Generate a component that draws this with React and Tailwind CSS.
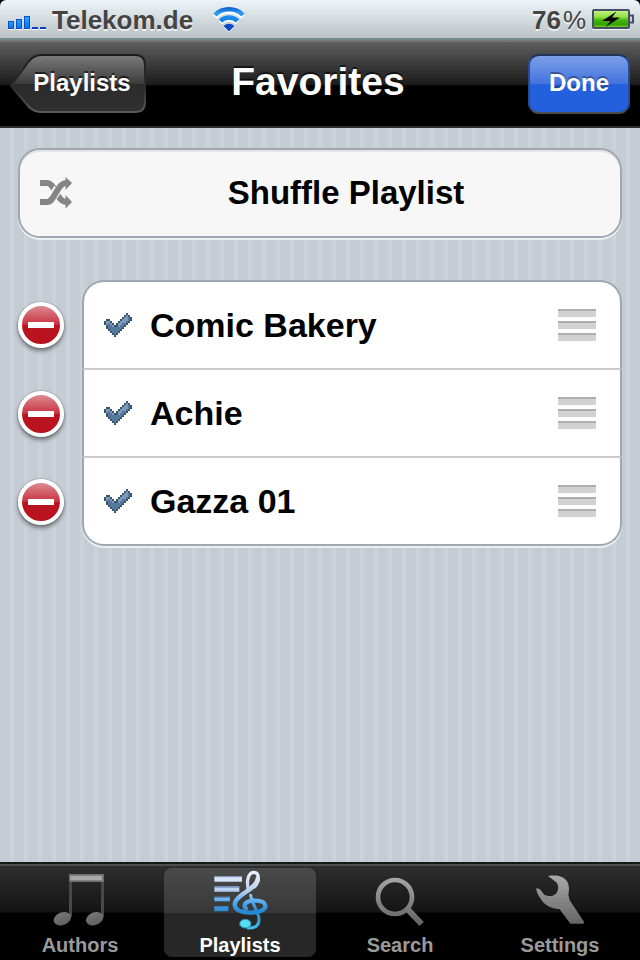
import React from "react";

const TRACKS = ["Comic Bakery", "Achie", "Gazza 01"];

const CHECK_ROWS = [
  "...........d..",
  "..........dld.",
  ".........dllmd",
  ".dd.....dlllmd",
  "dlld...dlllmd.",
  "dlmld.dllmmd..",
  ".dmmlddlmmd...",
  ".dmmmmmmmd....",
  "..dmmmmmd.....",
  "...dmmmd......",
  "....dmd.......",
  ".....d........",
];

const CHECK_COLOURS = { d: "#3a546f", m: "#54779e", l: "#7b9abb" };

function CheckIcon() {
  return (
    <svg viewBox="0 0 14 12" className="h-6 w-7 shrink-0" shapeRendering="crispEdges" aria-hidden="true">
      {CHECK_ROWS.map((row, y) =>
        row.split("").map((c, x) =>
          c === "." ? null : (
            <rect key={`${x}-${y}`} x={x} y={y} width="1" height="1" fill={CHECK_COLOURS[c]} />
          )
        )
      )}
    </svg>
  );
}

function SignalIcon() {
  return (
    <svg viewBox="0 0 39 22" className="h-[22px] w-[39px]" aria-hidden="true">
      <defs>
        <linearGradient id="signal" x1="0" y1="0" x2="0" y2="1">
          <stop offset="0" stopColor="#2aa4fa" />
          <stop offset="1" stopColor="#0a6fe6" />
        </linearGradient>
      </defs>
      <g transform="translate(0 6)">
        <g fill="url(#signal)" stroke="#0b50c8" strokeWidth="1">
          <rect x="0.5" y="6.500" width="5" height="7" />
          <rect x="8.500" y="4.500" width="5" height="9" />
          <rect x="16.500" y="1.500" width="5" height="12" />
        </g>
        <path d="M24 12h6v2h-6zM32 12h6v2h-6z" fill="#0a3fc4" />
        <path d="M0 14h6v1H0zM8 14h6v1H8zM16 14h6v1h-6zM24 14h6v1h-6zM32 14h6v1h-6z" fill="#fff" />
      </g>
    </svg>
  );
}

function WifiIcon() {
  return (
    <svg viewBox="0 0 32 26" className="h-[26px] w-8" aria-hidden="true">
      <defs>
        <linearGradient id="wifi" gradientUnits="userSpaceOnUse" x1="0" y1="0" x2="0" y2="24">
          <stop offset="0" stopColor="#0d57c8" />
          <stop offset="0.25" stopColor="#2b9bf4" />
          <stop offset="0.55" stopColor="#1583ee" />
          <stop offset="1" stopColor="#0a3fbd" />
        </linearGradient>
      </defs>
      <g transform="translate(0 1)" fill="none" stroke="#fff" strokeWidth="5">
        <path d="M2 9a20 20 0 0 1 28 0" />
        <path d="M7.500 14.500a12 12 0 0 1 17 0" />
      </g>
      <path d="M16 25.500l-6-6q6-5 12 0z" fill="#fff" />
      <g fill="none" stroke="url(#wifi)" strokeWidth="4.500">
        <path d="M2 8a20 20 0 0 1 28 0" />
        <path d="M7.500 14a12 12 0 0 1 17 0" />
      </g>
      <path d="M16 24.500l-5.500-5.500q5.500-4.500 11 0z" fill="#0a49c8" />
    </svg>
  );
}

function BatteryIcon() {
  return (
    <svg viewBox="0 0 42 22" className="h-[22px] w-[42px]" aria-hidden="true">
      <defs>
        <linearGradient id="battery" x1="0" y1="0" x2="0" y2="1">
          <stop offset="0" stopColor="#c8f58c" />
          <stop offset="0.4" stopColor="#8fe03c" />
          <stop offset="0.55" stopColor="#43b80c" />
          <stop offset="0.8" stopColor="#35a000" />
          <stop offset="1" stopColor="#7be02a" />
        </linearGradient>
      </defs>
      <path d="M0 20h38v1H0z" fill="#fff" opacity="0.8" />
      <rect x="1" y="1" width="36" height="18" rx="1" fill="url(#battery)" stroke="#484e66" strokeWidth="2" />
      <path d="M38 6.500h3v7h-3" fill="#cdd2d8" stroke="#484e66" strokeWidth="2" />
      <path d="M24.500 2.500L10 12h8.500l-5 6L28 8.500h-8z" fill="#000" />
    </svg>
  );
}

function ShuffleIcon() {
  return (
    <svg viewBox="0 0 32 32" className="h-8 w-8 shrink-0" aria-hidden="true">
      <g fill="none" stroke="#858585" strokeWidth="6">
        <path d="M0 6h7c4 0 6 4 9 9.500s6 9.500 10 9.500h2" />
        <path d="M13 19.500l5-8" stroke="#f7f7f7" strokeWidth="9" />
        <path d="M0 25h7c4 0 6-4 9-9.500S22 6 26 6h2" />
      </g>
      <path d="M25.500 0L32 6l-6.500 7zM25.500 18L32 25l-6.500 6.500z" fill="#858585" />
    </svg>
  );
}

function MinusButton({ label }) {
  return (
    <button
      type="button"
      aria-label={label}
      className="flex h-[46px] w-[46px] items-center justify-center rounded-full border-4 border-white bg-[linear-gradient(#dd8a92_0%,#c8323f_49%,#ba1320_50%,#ba1320_100%)] shadow-[0_3px_4px_rgba(0,0,0,0.45),0_0_2px_rgba(0,0,0,0.35)]"
    >
      <span className="h-[6px] w-[26px] bg-white" />
    </button>
  );
}

function Grip() {
  return (
    <span className="flex w-[38px] flex-col gap-1">
      <span className="h-2 border-t-2 border-[#aeaeae] bg-[#d2d2d2]" />
      <span className="h-2 border-t-2 border-[#aeaeae] bg-[#d2d2d2]" />
      <span className="h-2 border-t-2 border-[#aeaeae] bg-[#d2d2d2]" />
    </span>
  );
}

function GreyGradient({ id }) {
  return (
    <defs>
      <linearGradient id={id} gradientUnits="userSpaceOnUse" x1="0" y1="70" x2="0" y2="230">
        <stop offset="0" stopColor="#adadad" />
        <stop offset="1" stopColor="#606060" />
      </linearGradient>
    </defs>
  );
}

function NotesIcon() {
  return (
    <svg viewBox="156 60 168 180" className="h-[60px] w-14" aria-hidden="true">
      <GreyGradient id="notes" />
      <path d="M207 72h105v24H207z" fill="#707070" />
      <path d="M211 77h95v14h-95z" fill="#a8a8a8" />
      <path d="M207 96h9v104h-9zM303 96h9v104h-9z" fill="#484848" />
      <g fill="url(#notes)">
        <ellipse cx="187" cy="206" rx="27" ry="19" transform="rotate(-22 187 206)" />
        <ellipse cx="284" cy="206" rx="27" ry="19" transform="rotate(-22 284 206)" />
      </g>
    </svg>
  );
}

function ClefIcon() {
  return (
    <svg viewBox="156 60 168 180" className="h-[60px] w-14" aria-hidden="true">
      <defs>
        <linearGradient id="clef" gradientUnits="userSpaceOnUse" x1="0" y1="60" x2="0" y2="240">
          <stop offset="0" stopColor="#f2f5fb" />
          <stop offset="0.35" stopColor="#b9cff0" />
          <stop offset="0.52" stopColor="#5aaef0" />
          <stop offset="0.7" stopColor="#2687d2" />
          <stop offset="1" stopColor="#3fc4ea" />
        </linearGradient>
      </defs>
      <path
        d="M163 78h83v17h-83zM163 109h75v16h-75zM163 140h47v14h-47zM163 168h42v16h-42z"
        fill="url(#clef)"
      />
      <path d="M163 78h83v4h-83zM163 109h75v4h-75zM163 140h47v4h-47zM163 168h42v4h-42z" fill="#42689e" opacity="0.6" />
      <g fill="none" stroke="url(#clef)" strokeLinecap="round">
        <path d="M266 122C258 96 264 68 281 67C298 68 300 92 284 110" strokeWidth="10" />
        <path d="M293 86C292 118 224 134 224 164C225 182 248 189 275 188C300 187 317 180 316 167C315 154 296 151 277 152C258 154 248 164 258 176" strokeWidth="13" />
        <path d="M272 136C276 160 290 176 296 200C301 224 288 235 264 234" strokeWidth="9" />
      </g>
      <ellipse cx="256" cy="221" rx="17" ry="13" fill="#55dcf2" stroke="#2393b8" strokeWidth="3" />
    </svg>
  );
}

function SearchIcon() {
  return (
    <svg viewBox="96 60 168 180" className="h-[60px] w-14" aria-hidden="true">
      <GreyGradient id="search" />
      <g fill="none" stroke="url(#search)">
        <circle cx="165" cy="141" r="51" strokeWidth="14" />
        <path d="M203 178l42 44" strokeWidth="18" />
      </g>
    </svg>
  );
}

function WrenchIcon() {
  return (
    <svg viewBox="576 60 168 180" className="h-[60px] w-14" aria-hidden="true">
      <GreyGradient id="wrench" />
      <path
        d="M624 78C650 74 672 79 682 95C688 106 688 120 685 134L689 151L732 215L731 221H691L659 178C632 176 612 165 601 145C594 134 588 124 589 114L600 118L613 134C627 141 642 139 650 128C657 117 656 103 647 95Z"
        fill="url(#wrench)"
      />
    </svg>
  );
}

const TABS = [
  { label: "Authors", Icon: NotesIcon },
  { label: "Playlists", Icon: ClefIcon, active: true },
  { label: "Search", Icon: SearchIcon },
  { label: "Settings", Icon: WrenchIcon },
];

function rowShape(index) {
  if (index === 0) return "h-[90px] rounded-t-[22px] border-t-2 border-b-2 border-b-[#cbcbcd]";
  if (index === TRACKS.length - 1)
    return "h-[88px] rounded-b-[22px] border-b-2 shadow-[0_2px_0_#eef1f4]";
  return "h-[88px] border-b-2 border-b-[#cbcbcd]";
}

export default function App() {
  return (
    <div className="flex min-h-screen flex-col bg-[#c5ccd4] font-['Liberation_Sans',Arial,sans-serif] font-bold">
      <div className="bg-black">
        <div className="flex h-10 items-center justify-between rounded-t-[6px] border-b-2 border-[#78878c] bg-[linear-gradient(#eef5f8,#bac2c5)] pt-[2px] pr-[6px] pl-2 text-[26px] text-[#444] [text-shadow:0_2px_0_rgba(255,255,255,0.7)]">
          <div className="flex items-center">
            <SignalIcon />
            <span className="pl-[5px]">Telekom.de</span>
            <span className="pl-5">
              <WifiIcon />
            </span>
          </div>
          <div className="flex items-center gap-[6px]">
            <span className="flex gap-[2px]">
              <span>76</span>
              <span className="font-normal">%</span>
            </span>
            <BatteryIcon />
          </div>
        </div>
      </div>

      <header className="grid h-[88px] grid-cols-[1fr_auto_1fr] items-center border-t-2 border-b-2 border-t-[#757575] border-b-[#2d2d2d] bg-[linear-gradient(#5e5e5e_0%,#1b1b1b_51%,#000_52%,#000_100%)] px-[10px] text-white">
        <button
          type="button"
          className="relative flex h-[60px] w-[136px] items-center justify-center pb-[2px] pl-2 text-2xl [text-shadow:0_-2px_0_rgba(0,0,0,0.6)]"
        >
          <svg viewBox="0 0 136 60" className="absolute inset-0 h-full w-full" aria-hidden="true">
            <defs>
              <linearGradient id="back" x1="0" y1="0" x2="0" y2="1">
                <stop offset="0" stopColor="#7c7c7c" />
                <stop offset="0.5" stopColor="#3c3c3c" />
                <stop offset="0.51" stopColor="#2b2b2b" />
                <stop offset="1" stopColor="#303030" />
              </linearGradient>
              <linearGradient id="backEdge" x1="0" y1="0" x2="0" y2="1">
                <stop offset="0" stopColor="#1c1c1c" />
                <stop offset="0.6" stopColor="#303030" />
                <stop offset="1" stopColor="#5a5a5a" />
              </linearGradient>
            </defs>
            <path
              d="M1 32L19 7Q24 1 32 1H125Q135 1 135 11V48Q135 58 125 58H32Q24 58 19 53Z"
              fill="url(#back)"
              stroke="url(#backEdge)"
              strokeWidth="2"
            />
          </svg>
          <span className="relative">Playlists</span>
        </button>
        <h1 className="pr-1 pb-1 text-[39px] leading-[44px] [text-shadow:0_-2px_0_rgba(0,0,0,0.6)]">Favorites</h1>
        <button
          type="button"
          className="h-[60px] w-[102px] justify-self-end rounded-[11px] border-2 border-t-[#23345c] border-r-[#2a4a92] border-b-[#4c4c4c] border-l-[#2a4a92] bg-[linear-gradient(#7d9fe8_0%,#4173dd_50%,#2260dd_51%,#2260dd_100%)] pb-[2px] text-2xl [text-shadow:0_-2px_0_rgba(0,0,0,0.35)]"
        >
          Done
        </button>
      </header>

      <main className="flex-1 bg-[repeating-linear-gradient(90deg,#c5ccd4_0px,#c5ccd4_10px,#cbd2d8_10px,#cbd2d8_14px)] px-[18px] pt-5">
        <button
          type="button"
          className="flex h-[90px] w-full items-center rounded-[22px] border-2 border-[#a0a7b2] bg-[#f7f7f7] pl-5 text-[33px] text-black shadow-[0_2px_0_#eef1f4,inset_0_2px_0_#e4e4e6]"
        >
          <ShuffleIcon />
          <span className="flex-1 text-center">Shuffle Playlist</span>
        </button>

        <ul className="mt-[42px]">
          {TRACKS.map((track, index) => (
            <li key={track} className="flex items-center">
              <div className="w-16 shrink-0">
                <MinusButton label={`Remove ${track}`} />
              </div>
              <div
                className={`flex flex-1 items-center border-x-2 border-[#a0a7b2] bg-white pr-6 pl-5 text-[34px] text-black ${rowShape(index)}`}
              >
                <CheckIcon />
                <span className="flex-1 pl-[18px]">{track}</span>
                <Grip />
              </div>
            </li>
          ))}
        </ul>
      </main>

      <nav className="border-t-2 border-[#17181a] bg-black">
        <div className="grid h-24 grid-cols-4 border-t-2 border-[#4c4d4e] bg-[linear-gradient(#2e2e2e_0%,#141414_49%,#000_50%,#000_100%)]">
          {TABS.map(({ label, Icon, active }) => (
            <a
              key={label}
              href={`#${label.toLowerCase()}`}
              aria-current={active ? "page" : undefined}
              className={`mx-1 mt-[2px] mb-1 flex flex-col items-center rounded-lg pt-[2px] text-xl leading-6 ${
                active
                  ? "bg-[linear-gradient(#4a4a4a_0%,#383838_50%,#272727_51%,#272727_100%)] text-white"
                  : "text-[#9a9a9a]"
              }`}
            >
              <Icon />
              <span className="pt-[3px]">{label}</span>
            </a>
          ))}
        </div>
      </nav>
    </div>
  );
}
